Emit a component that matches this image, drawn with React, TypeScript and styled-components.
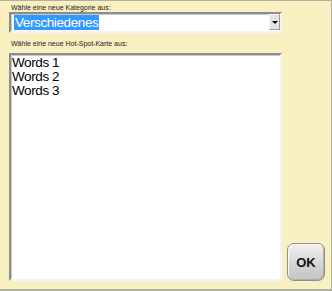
import React from 'react';
import styled, { createGlobalStyle } from 'styled-components';

const GlobalStyle = createGlobalStyle`
  html, body {
    margin: 0;
    padding: 0;
    background: #f8f0c0;
  }
`;

const Frame = styled.div`
  box-sizing: border-box;
  width: 332px;
  height: 291px;
  background: #f8f0c0;
  border-top: 1px solid #b4b0a0;
  border-right: 1px solid #b4b0a0;
  border-bottom: 2px solid #b4b0a0;
  padding: 3px 0 0 9px;
  display: grid;
  grid-template-columns: 273px 1fr;
  column-gap: 5px;
  font-family: 'Liberation Sans', Arial, sans-serif;
`;

const Form = styled.div`
  display: flex;
  flex-direction: column;
`;

const Side = styled.div`
  display: flex;
  align-items: flex-end;
  padding-bottom: 8px;
`;

const Label = styled.div<{ $gap?: number }>`
  font-size: 7px;
  line-height: 8px;
  color: #222;
  padding-left: 2px;
  margin-top: ${(p) => p.$gap ?? 0}px;
  margin-bottom: ${(p) => (p.$gap ? 5 : 0)}px;
`;

const Inset = styled.div`
  box-sizing: border-box;
  background: #fff;
  border-style: solid;
  border-width: 2px;
  border-color: #8c8c8c #f4f4f4 #f4f4f4 #8c8c8c;
  box-shadow: inset 1px 1px 0 #c8c8c8;
`;

const Select = styled(Inset)`
  height: 21px;
  display: flex;
  align-items: stretch;
  padding: 0 0 0 3px;
`;

const Value = styled.div`
  flex: 1;
  display: flex;
  align-items: center;
  font-size: 13.5px;
  line-height: 15px;
`;

const Selected = styled.span`
  background: #3399ff;
  color: #fff;
  padding: 0 1px;
  letter-spacing: -0.4px;
`;

const DropButton = styled.div`
  box-sizing: border-box;
  width: 11px;
  margin: 0 0 1px 0;
  background: #e4e4e4;
  border: 1px solid #9a9a9a;
  border-top-color: #f6f6f6;
  border-left-color: #f6f6f6;
  display: flex;
  align-items: center;
  justify-content: center;
`;

const Arrow = styled.span`
  width: 0;
  height: 0;
  border-left: 3px solid transparent;
  border-right: 3px solid transparent;
  border-top: 3px solid #000;
`;

const List = styled(Inset)`
  height: 228px;
  padding: 1px 0 0 1px;
`;

const Item = styled.div`
  font-size: 13.5px;
  line-height: 14px;
  color: #000;
  letter-spacing: -0.4px;
`;

const OkButton = styled.button`
  box-sizing: border-box;
  width: 38px;
  height: 38px;
  border-radius: 7px;
  border: 1px solid #8e8e8e;
  background: linear-gradient(#f0f0f0, #d6d6d6 55%, #c4c4c4);
  box-shadow: inset 1px 1px 0 #fafafa, inset -1px -1px 0 #b0b0b0;
  font-family: 'Liberation Sans', Arial, sans-serif;
  font-weight: bold;
  font-size: 13px;
  color: #111;
  padding: 0;
  cursor: pointer;
`;

const words = ['Words 1', 'Words 2', 'Words 3'];

const App: React.FC = () => {
  return (
    <>
      <GlobalStyle />
      <Frame>
        <Form>
          <Label>Wähle eine neue Kategorie aus:</Label>
          <Select>
            <Value>
              <Selected>Verschiedenes</Selected>
            </Value>
            <DropButton>
              <Arrow />
            </DropButton>
          </Select>
          <Label $gap={7}>Wähle eine neue Hot-Spot-Karte aus:</Label>
          <List>
            {words.map((w) => (
              <Item key={w}>{w}</Item>
            ))}
          </List>
        </Form>
        <Side>
          <OkButton>OK</OkButton>
        </Side>
      </Frame>
    </>
  );
};

export default App;
